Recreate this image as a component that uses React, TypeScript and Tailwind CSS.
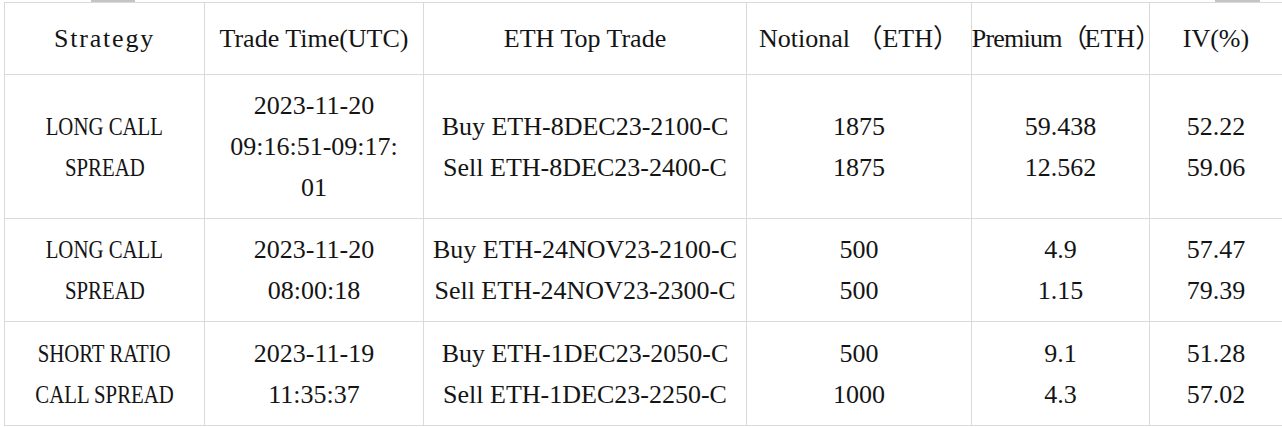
import React from 'react';

type Row = {
  strategy: string[];
  time: string[];
  trades: string[];
  notional: string[];
  premium: string[];
  iv: string[];
  height: string;
};

const rows: Row[] = [
  {
    strategy: ['LONG CALL', 'SPREAD'],
    time: ['2023-11-20', '09:16:51-09:17:', '01'],
    trades: ['Buy ETH-8DEC23-2100-C', 'Sell ETH-8DEC23-2400-C'],
    notional: ['1875', '1875'],
    premium: ['59.438', '12.562'],
    iv: ['52.22', '59.06'],
    height: 'h-[144px]',
  },
  {
    strategy: ['LONG CALL', 'SPREAD'],
    time: ['2023-11-20', '08:00:18'],
    trades: ['Buy ETH-24NOV23-2100-C', 'Sell ETH-24NOV23-2300-C'],
    notional: ['500', '500'],
    premium: ['4.9', '1.15'],
    iv: ['57.47', '79.39'],
    height: 'h-[103px]',
  },
  {
    strategy: ['SHORT RATIO', 'CALL SPREAD'],
    time: ['2023-11-19', '11:35:37'],
    trades: ['Buy ETH-1DEC23-2050-C', 'Sell ETH-1DEC23-2250-C'],
    notional: ['500', '1000'],
    premium: ['9.1', '4.3'],
    iv: ['51.28', '57.02'],
    height: 'h-[104px]',
  },
];

function Cell({
  lines,
  height,
  last,
  caps,
}: {
  lines: React.ReactNode[];
  height: string;
  last?: boolean;
  caps?: boolean;
}) {
  return (
    <div
      className={`${height} flex flex-col items-center justify-center border-b border-[#dadada] ${
        last ? '' : 'border-r'
      }`}
    >
      {lines.map((l, i) => (
        <span
          key={i}
          className={`whitespace-nowrap leading-[41px] ${caps ? 'inline-block scale-x-80' : ''}`}
        >
          {l}
        </span>
      ))}
    </div>
  );
}

export default function App() {
  const headers: React.ReactNode[] = [
    <span className="tracking-[1.8px]">Strategy</span>,
    'Trade Time(UTC)',
    'ETH Top Trade',
    'Notional （ETH）',
    <>
      <span className="tracking-[-0.8px]">Premium</span>
      <span className="tracking-[-3px]">（</span>
      ETH
      <span className="tracking-[-12px]">）</span>
    </>,
    'IV(%)',
  ];

  return (
    <div
      className="w-[1282px] h-[427px] overflow-hidden bg-white text-[26px] text-[#141414]"
      style={{ fontFamily: '"Liberation Serif", "Noto Sans CJK SC", serif' }}
    >
      {/* scroll marks along the top edge */}
      <div className="flex h-[2px]">
        <div className="ml-[91px] w-[44px] bg-[#c4c4c4]" />
        <div className="ml-auto mr-[22px] w-[45px] bg-[#c4c4c4]" />
      </div>

      <div className="ml-[4px] grid grid-cols-[200px_219px_323px_225px_178px_132px] border-l border-t border-[#dadada]">
        {headers.map((h, i) => (
          <Cell key={i} lines={[h]} height="h-[72px]" last={i === headers.length - 1} />
        ))}

        {rows.map((r, idx) => (
          <React.Fragment key={idx}>
            <Cell lines={r.strategy} height={r.height} caps />
            <Cell lines={r.time} height={r.height} />
            <Cell lines={r.trades} height={r.height} />
            <Cell lines={r.notional} height={r.height} />
            <Cell lines={r.premium} height={r.height} />
            <Cell lines={r.iv} height={r.height} last />
          </React.Fragment>
        ))}
      </div>
    </div>
  );
}
